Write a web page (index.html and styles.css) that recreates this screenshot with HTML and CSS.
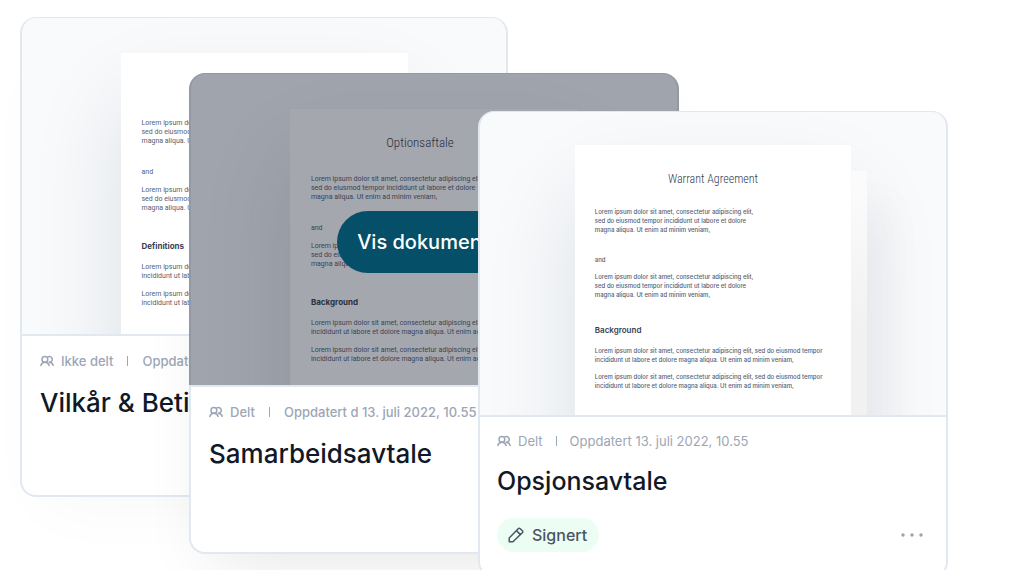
FILE: index.html
```html
<!DOCTYPE html>
<html lang="no">
<head>
<meta charset="utf-8">
<meta name="viewport" content="width=device-width, initial-scale=1">
<title>Dokumenter</title>
<link rel="stylesheet" href="styles.css">
</head>
<body>
<svg class="sprite" aria-hidden="true">
  <symbol id="people" viewBox="0 0 14 12">
    <g fill="none" stroke="currentColor" stroke-width="1.5" stroke-linecap="round" stroke-linejoin="round">
      <circle cx="4.900" cy="4.400" r="2.900"/>
      <path d="M.8 10.400C1.500 8.400 2.800 7.300 4.900 7.300S8.500 8.400 9.200 10.400"/>
      <path d="M7.900 1.900a2.900 2.900 0 1 1 1.300 5.400C11.300 7.300 12.600 8.400 13.200 10.400"/>
    </g>
  </symbol>
</svg>
<main class="stage">
  <article class="card card-back">
    <div class="preview">
      <div class="clip">
        <div class="paper">
          <h3 class="paper-title"></h3>
          <p class="intro">Lorem ipsum dolor sit amet, consectetur adipiscing elit,<br>sed do eiusmod tempor incididunt ut labore et dolore<br>magna aliqua. Ut enim ad minim veniam,</p>
          <p class="and">and</p>
          <p class="party">Lorem ipsum dolor sit amet, consectetur adipiscing elit,<br>sed do eiusmod tempor incididunt ut labore et dolore<br>magna aliqua. Ut enim ad minim veniam,</p>
          <h4 class="section">Definitions</h4>
          <p class="clause">Lorem ipsum dolor sit amet, consectetur adipiscing elit, sed do eiusmod tempor<br>incididunt ut labore et dolore magna aliqua. Ut enim ad minim veniam,</p>
          <p class="clause">Lorem ipsum dolor sit amet, consectetur adipiscing elit, sed do eiusmod tempor<br>incididunt ut labore et dolore magna aliqua. Ut enim ad minim veniam,</p>
        </div>
      </div>
    </div>
    <div class="info">
      <div class="meta"><svg class="people"><use href="#people"/></svg><span>Ikke delt</span><i class="divider"></i><span>Oppdatert 13. juli 2022, 10.55</span></div>
      <h2 class="title">Vilkår &amp; Betingelser</h2>
    </div>
  </article>

  <article class="card card-middle">
    <div class="preview">
      <div class="clip">
        <div class="paper">
          <h3 class="paper-title">Optionsaftale</h3>
          <p class="intro">Lorem ipsum dolor sit amet, consectetur adipiscing elit,<br>sed do eiusmod tempor incididunt ut labore et dolore<br>magna aliqua. Ut enim ad minim veniam,</p>
          <p class="and">and</p>
          <p class="party">Lorem ipsum dolor sit amet, consectetur adipiscing elit,<br>sed do eiusmod tempor incididunt ut labore et dolore<br>magna aliqua. Ut enim ad minim veniam,</p>
          <h4 class="section">Background</h4>
          <p class="clause">Lorem ipsum dolor sit amet, consectetur adipiscing elit, sed do eiusmod tempor<br>incididunt ut labore et dolore magna aliqua. Ut enim ad minim veniam,</p>
          <p class="clause">Lorem ipsum dolor sit amet, consectetur adipiscing elit, sed do eiusmod tempor<br>incididunt ut labore et dolore magna aliqua. Ut enim ad minim veniam,</p>
        </div>
      </div>
      <div class="overlay"><button class="view" type="button">Vis dokumentet</button></div>
    </div>
    <div class="info">
      <div class="meta"><svg class="people"><use href="#people"/></svg><span>Delt</span><i class="divider"></i><span>Oppdatert d 13. juli 2022, 10.55</span></div>
      <h2 class="title">Samarbeidsavtale</h2>
    </div>
  </article>

  <article class="card card-front">
    <div class="preview">
      <div class="clip">
        <div class="paper stacked">
          <h3 class="paper-title">Warrant Agreement</h3>
          <p class="intro">Lorem ipsum dolor sit amet, consectetur adipiscing elit,<br>sed do eiusmod tempor incididunt ut labore et dolore<br>magna aliqua. Ut enim ad minim veniam,</p>
          <p class="and">and</p>
          <p class="party">Lorem ipsum dolor sit amet, consectetur adipiscing elit,<br>sed do eiusmod tempor incididunt ut labore et dolore<br>magna aliqua. Ut enim ad minim veniam,</p>
          <h4 class="section">Background</h4>
          <p class="clause">Lorem ipsum dolor sit amet, consectetur adipiscing elit, sed do eiusmod tempor<br>incididunt ut labore et dolore magna aliqua. Ut enim ad minim veniam,</p>
          <p class="clause">Lorem ipsum dolor sit amet, consectetur adipiscing elit, sed do eiusmod tempor<br>incididunt ut labore et dolore magna aliqua. Ut enim ad minim veniam,</p>
        </div>
      </div>
    </div>
    <div class="info">
      <div class="meta"><svg class="people"><use href="#people"/></svg><span>Delt</span><i class="divider"></i><span>Oppdatert 13. juli 2022, 10.55</span></div>
      <h2 class="title">Opsjonsavtale</h2>
      <div class="actions">
        <span class="badge">
          <svg class="pencil" viewBox="0 0 16 16" fill="none" stroke="currentColor" stroke-width="1.500" stroke-linejoin="round" stroke-linecap="round"><path d="M1.200 14.800V11L10.200 1.700a1.500 1.500 0 0 1 2.100 0l2 2a1.500 1.500 0 0 1 0 2.100L5 14.800ZM8.400 3.600l4 4"/></svg>
          Signert
        </span>
        <button class="more" type="button" aria-label="Flere valg"><svg class="dots" viewBox="0 0 22 4" fill="currentColor"><circle cx="2" cy="2" r="1.700"/><circle cx="11" cy="2" r="1.700"/><circle cx="20" cy="2" r="1.700"/></svg></button>
      </div>
    </div>
  </article>
</main>
</body>
</html>
```
FILE: styles.css
```css
* { box-sizing: border-box; }

body {
  margin: 0;
  background: #fff;
  color: #111827;
  font-family: Inter, "Liberation Sans", sans-serif;
}

h2, h3, h4, p { margin: 0; }

.sprite { position: absolute; width: 0; height: 0; }

/* Cards overlap by sharing columns of one grid row. */
.stage {
  display: grid;
  grid-template-columns: 169fr 289fr 30fr 171fr 269fr;
  align-items: start;
  height: 100vh;
  padding: 0 64px 0 20px;
  overflow: hidden;
}

.card {
  --line: #e2e8f0;
  grid-row: 1;
  min-width: 0;
  border-radius: 16px;
  background: #fff;
}

.card-back {
  grid-column: 1 / 4;
  margin-top: 17px;
  box-shadow: 0 32px 64px -24px rgba(0, 0, 0, 0.03);
}

.card-middle {
  grid-column: 2 / 5;
  margin-top: 73px;
  box-shadow: 0 32px 64px -24px rgba(0, 0, 0, 0.1);
}

.card-front {
  grid-column: 3 / 6;
  margin-top: 111px;
}

.preview {
  position: relative;
  border: 2px solid var(--line);
  border-top-width: 1px;
  border-radius: 16px 16px 0 0;
  background: #f8fafc;
}

.clip {
  height: 316px;
  padding-top: 35px;
  border-radius: 14px 14px 0 0;
  overflow: hidden;
}

.card-middle .clip { height: 311px; }
.card-front .clip { height: 303px; padding-top: 33px; }

.paper {
  position: relative;
  width: 59.3%;
  height: 320px;
  margin: 0 auto;
  padding: 24px 21px;
  background: #fff;
  box-shadow: 0 48px 88px rgba(15, 23, 42, 0.11);
  color: #566072;
  font-family: Roboto, Inter, sans-serif;
  font-size: 7px;
  line-height: 9px;
  white-space: nowrap;
}

.card-front .paper {
  padding: 24px 20px;
  font-family: Inter, "Liberation Sans", sans-serif;
  font-size: 6px;
  font-weight: 500;
}

/* Second sheet behind the first one. */
.stacked::after {
  content: "";
  position: absolute;
  top: 26px;
  left: 100%;
  width: 16px;
  height: 100%;
  background: linear-gradient(#fcfcfc, #f1f1f1 50%);
  box-shadow: 16px 32px 40px rgba(15, 23, 42, 0.08);
  clip-path: inset(0 -100px -100px 0);
}

.paper-title {
  height: 20px;
  color: #374151;
  font-family: "Roboto Condensed", "Liberation Sans Narrow", sans-serif;
  font-size: 13px;
  font-weight: 300;
  line-height: 20px;
  text-align: center;
}

.card-middle .paper-title { padding-right: 28px; }
.card-front .paper-title { font-size: 12px; }

.intro { margin-top: 22px; }
.and { margin-top: 22px; }
.party { margin-top: 9px; }

.section {
  margin-top: 28px;
  color: #374151;
  font-family: Inter, "Liberation Sans", sans-serif;
  font-size: 8px;
  font-weight: 700;
  line-height: 11px;
}

.clause { margin-top: 9px; }
.section + .clause { margin-top: 11px; }

.card-front .intro { margin-top: 18px; }
.card-front .and { margin-top: 21px; }
.card-front .party { margin-top: 8px; }
.card-front .section { margin-top: 26px; font-weight: 600; }
.card-front .clause { margin-top: 8px; }
.card-front .section + .clause { margin-top: 10px; }

.overlay {
  position: absolute;
  inset: -1px -2px 0;
  display: flex;
  align-items: center;
  justify-content: center;
  padding-top: 26px;
  border-radius: 16px 16px 0 0;
  background: rgba(15, 23, 42, 0.38);
}

.view {
  height: 62px;
  padding: 0 24px 0 20px;
  border: 0;
  border-radius: 31px;
  background: #054f68;
  color: #fff;
  font: 500 20px Inter, "Liberation Sans", sans-serif;
}

.info {
  min-height: 161px;
  padding: 16px 18px 17px;
  border: 2px solid var(--line);
  border-top: 0;
  border-radius: 0 0 16px 16px;
}

.card-middle .info { min-height: 167px; }
.card-front .info { padding: 15px 17px 17px; }

.meta {
  display: flex;
  align-items: center;
  color: #9ca6b5;
  font-size: 13px;
  font-weight: 500;
  line-height: 18px;
  white-space: nowrap;
  overflow: hidden;
}

.card-front .meta { font-weight: 400; }

.people {
  flex: none;
  width: 14px;
  height: 12px;
  margin-right: 7px;
}

.divider {
  flex: none;
  width: 1px;
  height: 10px;
  margin: 0 14px;
  background: currentColor;
}

.card-front .divider { margin: 0 13px; }

.title {
  margin-top: 16px;
  font-size: 26px;
  font-weight: 500;
  line-height: 34px;
}

.card-front .title { margin-top: 14px; font-size: 25px; }

.actions {
  display: flex;
  align-items: center;
  justify-content: space-between;
  margin-top: 20px;
}

.badge {
  display: flex;
  align-items: center;
  gap: 8px;
  height: 34px;
  padding: 0 12px 0 11px;
  border-radius: 17px;
  background: #ecfdf3;
  color: #4b5563;
  font-size: 16px;
  font-weight: 500;
}

.pencil { width: 16px; height: 16px; }

.more {
  display: flex;
  padding: 8px 6px;
  border: 0;
  background: none;
  color: #9ca3af;
}

.dots { width: 22px; height: 4px; }
```
